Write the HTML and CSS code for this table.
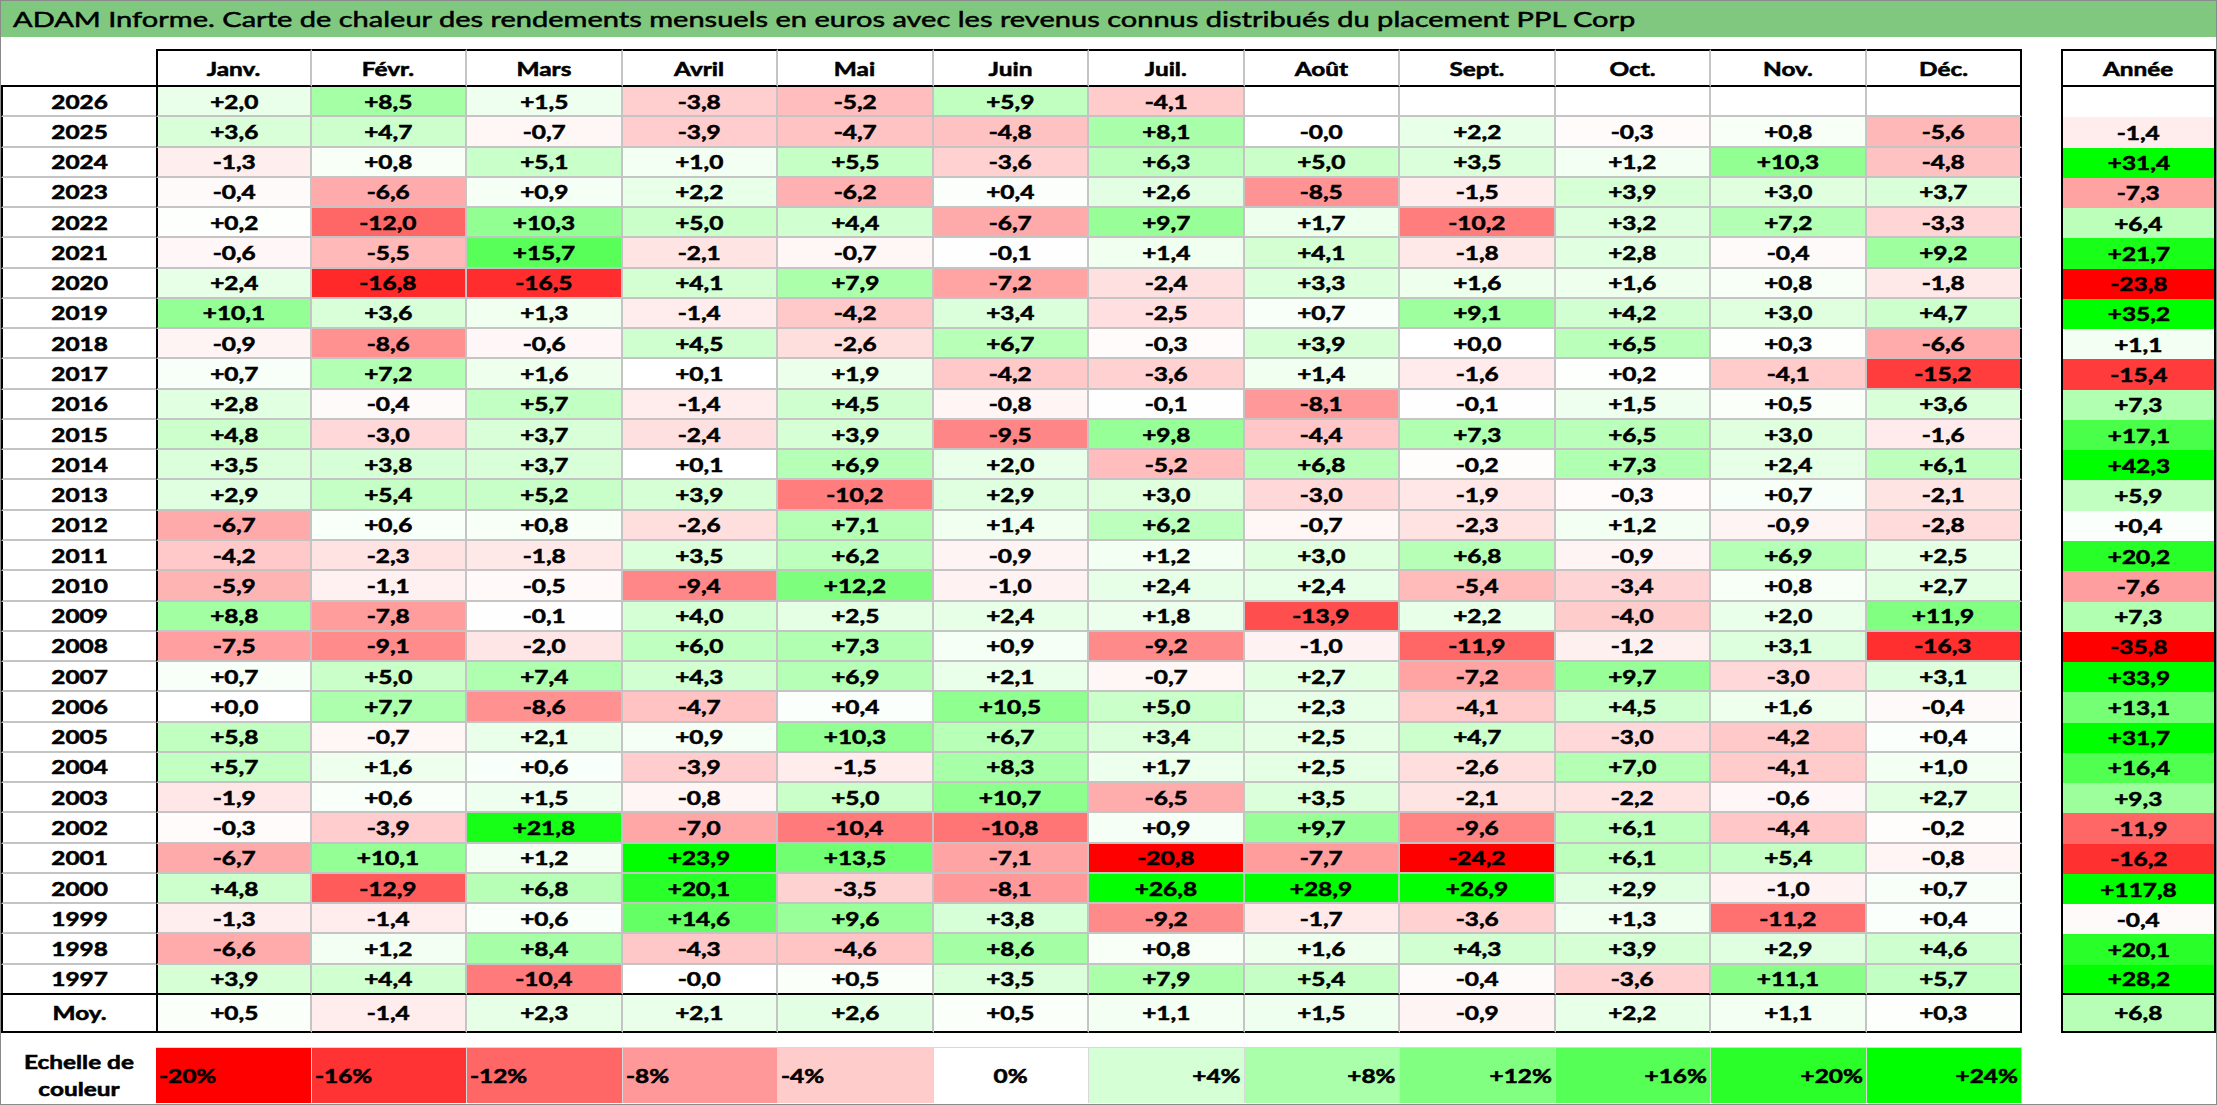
FILE: index.html
```html
<!DOCTYPE html>
<html lang="fr">
<head>
<meta charset="utf-8">
<title>ADAM Informe – PPL Corp</title>
<link rel="stylesheet" href="styles.css">
</head>
<body>
<div class="frame">
  <header class="title"><span class="t">ADAM Informe. Carte de chaleur des rendements mensuels en euros avec les revenus connus distribués du placement PPL Corp</span></header>
  <div class="sheet" id="sheet">
    <div class="c corner"></div>
    <div class="c hd first"><span class="t">Janv.</span></div>
    <div class="c hd"><span class="t">Févr.</span></div>
    <div class="c hd"><span class="t">Mars</span></div>
    <div class="c hd"><span class="t">Avril</span></div>
    <div class="c hd"><span class="t">Mai</span></div>
    <div class="c hd"><span class="t">Juin</span></div>
    <div class="c hd"><span class="t">Juil.</span></div>
    <div class="c hd"><span class="t">Août</span></div>
    <div class="c hd"><span class="t">Sept.</span></div>
    <div class="c hd"><span class="t">Oct.</span></div>
    <div class="c hd"><span class="t">Nov.</span></div>
    <div class="c hd last"><span class="t">Déc.</span></div>
    <div class="gap"></div>
    <div class="c an-h"><span class="t">Année</span></div>

    <div class="c lg-label"><span class="t">Echelle de<br>couleur</span></div>
    <div class="c lg neg l1"><span class="t">-20%</span></div>
    <div class="c lg neg l2"><span class="t">-16%</span></div>
    <div class="c lg neg l3"><span class="t">-12%</span></div>
    <div class="c lg neg l4"><span class="t">-8%</span></div>
    <div class="c lg neg l5"><span class="t">-4%</span></div>
    <div class="c lg mid l6"><span class="t">0%</span></div>
    <div class="c lg pos l7"><span class="t">+4%</span></div>
    <div class="c lg pos l8"><span class="t">+8%</span></div>
    <div class="c lg pos l9"><span class="t">+12%</span></div>
    <div class="c lg pos l10"><span class="t">+16%</span></div>
    <div class="c lg pos l11"><span class="t">+20%</span></div>
    <div class="c lg pos l12"><span class="t">+24%</span></div>
  </div>
</div>
<script src="script.js"></script>
</body>
</html>
```

FILE: styles.css
```css
* { box-sizing: border-box; }
html, body { margin: 0; padding: 0; background: #ffffff; }
body {
  font-family: "Lato", "Carlito", "Liberation Sans", sans-serif;
  color: #000000;
}
.frame {
  width: 2217px;
  height: 1105px;
  border: 1px solid #8a8a8a;
  overflow: hidden;
}
.title {
  height: 36px;
  background: #80c880;
  display: flex;
  align-items: center;
  padding-left: 12px;
  font-size: 21.5px;
  font-weight: 400;
  white-space: nowrap;
}
.title .t {
  transform-origin: left center;
  transform: scaleX(1.35);
  -webkit-text-stroke: 0.5px #000;
}

.sheet {
  display: grid;
  grid-template-columns: 155px repeat(12, minmax(0, 1fr)) 39px 155px;
  grid-template-rows: 38px repeat(30, 30.27px) 38px 14px 56px;
  margin-top: 12px;
  font-size: 19.5px;
  font-weight: 700;
}
.sheet .t { -webkit-text-stroke: 0.55px #000; }
.c {
  display: flex;
  align-items: center;
  justify-content: center;
  min-width: 0;
}
.t {
  display: inline-block;
  transform: scaleX(1.25);
  white-space: nowrap;
}

.corner { border-bottom: 2px solid #000; }
.hd {
  border-top: 2px solid #000;
  border-bottom: 2px solid #000;
  border-right: 2px solid #c4c4c4;
}
.hd.first { border-left: 2px solid #000; }
.hd.last { border-right: 2px solid #000; }
.an-h { border: 2px solid #000; }

.y {
  border-left: 2px solid #000;
  border-bottom: 2px solid #c4c4c4;
}
.v {
  border-right: 2px solid #c4c4c4;
  border-bottom: 2px solid #c4c4c4;
}
.v.first { border-left: 2px solid #000; }
.v.last { border-right: 2px solid #000; }
.a {
  border-left: 2px solid #000;
  border-right: 2px solid #000;
}
.c.end { border-bottom: 2px solid #000; }

.lg-label {
  grid-row: 34;
  grid-column: 1;
  text-align: center;
  line-height: 27px;
}
.lg {
  grid-row: 34;
  border-right: 1px solid #d8d8d8;
  border-top: 1px solid #d8d8d8;
}
.lg.neg { justify-content: flex-start; padding-left: 3px; }
.lg.neg .t { transform-origin: left center; }
.lg.pos { justify-content: flex-end; padding-right: 3px; }
.lg.pos .t { transform-origin: right center; }

.l1 { background: #ff0000; }
.l2 { background: #ff3333; }
.l3 { background: #ff6666; }
.l4 { background: #ff9999; }
.l5 { background: #ffcccc; }
.l6 { background: #ffffff; }
.l7 { background: #d5ffd5; }
.l8 { background: #aaffaa; }
.l9 { background: #80ff80; }
.l10 { background: #55ff55; }
.l11 { background: #2aff2a; }
.l12 { background: #00ff00; }
```

FILE: script.js
```js
(function () {
  var DATA = [
    "2026|+2,0 +8,5 +1,5 -3,8 -5,2 +5,9 -4,1 . . . . .|.",
    "2025|+3,6 +4,7 -0,7 -3,9 -4,7 -4,8 +8,1 -0,0 +2,2 -0,3 +0,8 -5,6|-1,4",
    "2024|-1,3 +0,8 +5,1 +1,0 +5,5 -3,6 +6,3 +5,0 +3,5 +1,2 +10,3 -4,8|+31,4",
    "2023|-0,4 -6,6 +0,9 +2,2 -6,2 +0,4 +2,6 -8,5 -1,5 +3,9 +3,0 +3,7|-7,3",
    "2022|+0,2 -12,0 +10,3 +5,0 +4,4 -6,7 +9,7 +1,7 -10,2 +3,2 +7,2 -3,3|+6,4",
    "2021|-0,6 -5,5 +15,7 -2,1 -0,7 -0,1 +1,4 +4,1 -1,8 +2,8 -0,4 +9,2|+21,7",
    "2020|+2,4 -16,8 -16,5 +4,1 +7,9 -7,2 -2,4 +3,3 +1,6 +1,6 +0,8 -1,8|-23,8",
    "2019|+10,1 +3,6 +1,3 -1,4 -4,2 +3,4 -2,5 +0,7 +9,1 +4,2 +3,0 +4,7|+35,2",
    "2018|-0,9 -8,6 -0,6 +4,5 -2,6 +6,7 -0,3 +3,9 +0,0 +6,5 +0,3 -6,6|+1,1",
    "2017|+0,7 +7,2 +1,6 +0,1 +1,9 -4,2 -3,6 +1,4 -1,6 +0,2 -4,1 -15,2|-15,4",
    "2016|+2,8 -0,4 +5,7 -1,4 +4,5 -0,8 -0,1 -8,1 -0,1 +1,5 +0,5 +3,6|+7,3",
    "2015|+4,8 -3,0 +3,7 -2,4 +3,9 -9,5 +9,8 -4,4 +7,3 +6,5 +3,0 -1,6|+17,1",
    "2014|+3,5 +3,8 +3,7 +0,1 +6,9 +2,0 -5,2 +6,8 -0,2 +7,3 +2,4 +6,1|+42,3",
    "2013|+2,9 +5,4 +5,2 +3,9 -10,2 +2,9 +3,0 -3,0 -1,9 -0,3 +0,7 -2,1|+5,9",
    "2012|-6,7 +0,6 +0,8 -2,6 +7,1 +1,4 +6,2 -0,7 -2,3 +1,2 -0,9 -2,8|+0,4",
    "2011|-4,2 -2,3 -1,8 +3,5 +6,2 -0,9 +1,2 +3,0 +6,8 -0,9 +6,9 +2,5|+20,2",
    "2010|-5,9 -1,1 -0,5 -9,4 +12,2 -1,0 +2,4 +2,4 -5,4 -3,4 +0,8 +2,7|-7,6",
    "2009|+8,8 -7,8 -0,1 +4,0 +2,5 +2,4 +1,8 -13,9 +2,2 -4,0 +2,0 +11,9|+7,3",
    "2008|-7,5 -9,1 -2,0 +6,0 +7,3 +0,9 -9,2 -1,0 -11,9 -1,2 +3,1 -16,3|-35,8",
    "2007|+0,7 +5,0 +7,4 +4,3 +6,9 +2,1 -0,7 +2,7 -7,2 +9,7 -3,0 +3,1|+33,9",
    "2006|+0,0 +7,7 -8,6 -4,7 +0,4 +10,5 +5,0 +2,3 -4,1 +4,5 +1,6 -0,4|+13,1",
    "2005|+5,8 -0,7 +2,1 +0,9 +10,3 +6,7 +3,4 +2,5 +4,7 -3,0 -4,2 +0,4|+31,7",
    "2004|+5,7 +1,6 +0,6 -3,9 -1,5 +8,3 +1,7 +2,5 -2,6 +7,0 -4,1 +1,0|+16,4",
    "2003|-1,9 +0,6 +1,5 -0,8 +5,0 +10,7 -6,5 +3,5 -2,1 -2,2 -0,6 +2,7|+9,3",
    "2002|-0,3 -3,9 +21,8 -7,0 -10,4 -10,8 +0,9 +9,7 -9,6 +6,1 -4,4 -0,2|-11,9",
    "2001|-6,7 +10,1 +1,2 +23,9 +13,5 -7,1 -20,8 -7,7 -24,2 +6,1 +5,4 -0,8|-16,2",
    "2000|+4,8 -12,9 +6,8 +20,1 -3,5 -8,1 +26,8 +28,9 +26,9 +2,9 -1,0 +0,7|+117,8",
    "1999|-1,3 -1,4 +0,6 +14,6 +9,6 +3,8 -9,2 -1,7 -3,6 +1,3 -11,2 +0,4|-0,4",
    "1998|-6,6 +1,2 +8,4 -4,3 -4,6 +8,6 +0,8 +1,6 +4,3 +3,9 +2,9 +4,6|+20,1",
    "1997|+3,9 +4,4 -10,4 -0,0 +0,5 +3,5 +7,9 +5,4 -0,4 -3,6 +11,1 +5,7|+28,2",
    "Moy.|+0,5 -1,4 +2,3 +2,1 +2,6 +0,5 +1,1 +1,5 -0,9 +2,2 +1,1 +0,3|+6,8"
  ];

  var sheet = document.getElementById("sheet");
  var anchor = sheet.querySelector(".lg-label");

  function color(s) {
    if (!s) return "#ffffff";
    var v = parseFloat(s.replace(",", "."));
    var t, c;
    if (v < 0) {
      t = Math.min(1, -v / 20);
      c = Math.round(255 * (1 - t));
      return "rgb(255," + c + "," + c + ")";
    }
    t = Math.min(1, v / 24);
    c = Math.round(255 * (1 - t));
    return "rgb(" + c + ",255," + c + ")";
  }

  function cell(cls, text, bg) {
    var d = document.createElement("div");
    d.className = cls;
    if (bg) d.style.background = bg;
    if (text) {
      var s = document.createElement("span");
      s.className = "t";
      s.textContent = text;
      d.appendChild(s);
    }
    sheet.insertBefore(d, anchor);
  }

  DATA.forEach(function (line, i) {
    var parts = line.split("|");
    var year = parts[0];
    var months = parts[1].split(" ").map(function (m) { return m === "." ? "" : m; });
    var annual = parts[2] === "." ? "" : parts[2];
    var end = (i >= DATA.length - 2) ? " end" : "";
    cell("c y" + end, year);
    months.forEach(function (m, j) {
      var cls = "c v" + (j === 0 ? " first" : "") + (j === 11 ? " last" : "") + end;
      cell(cls, m, color(m));
    });
    cell("gap", "");
    cell("c a" + end, annual, color(annual));
  });
})();
```
